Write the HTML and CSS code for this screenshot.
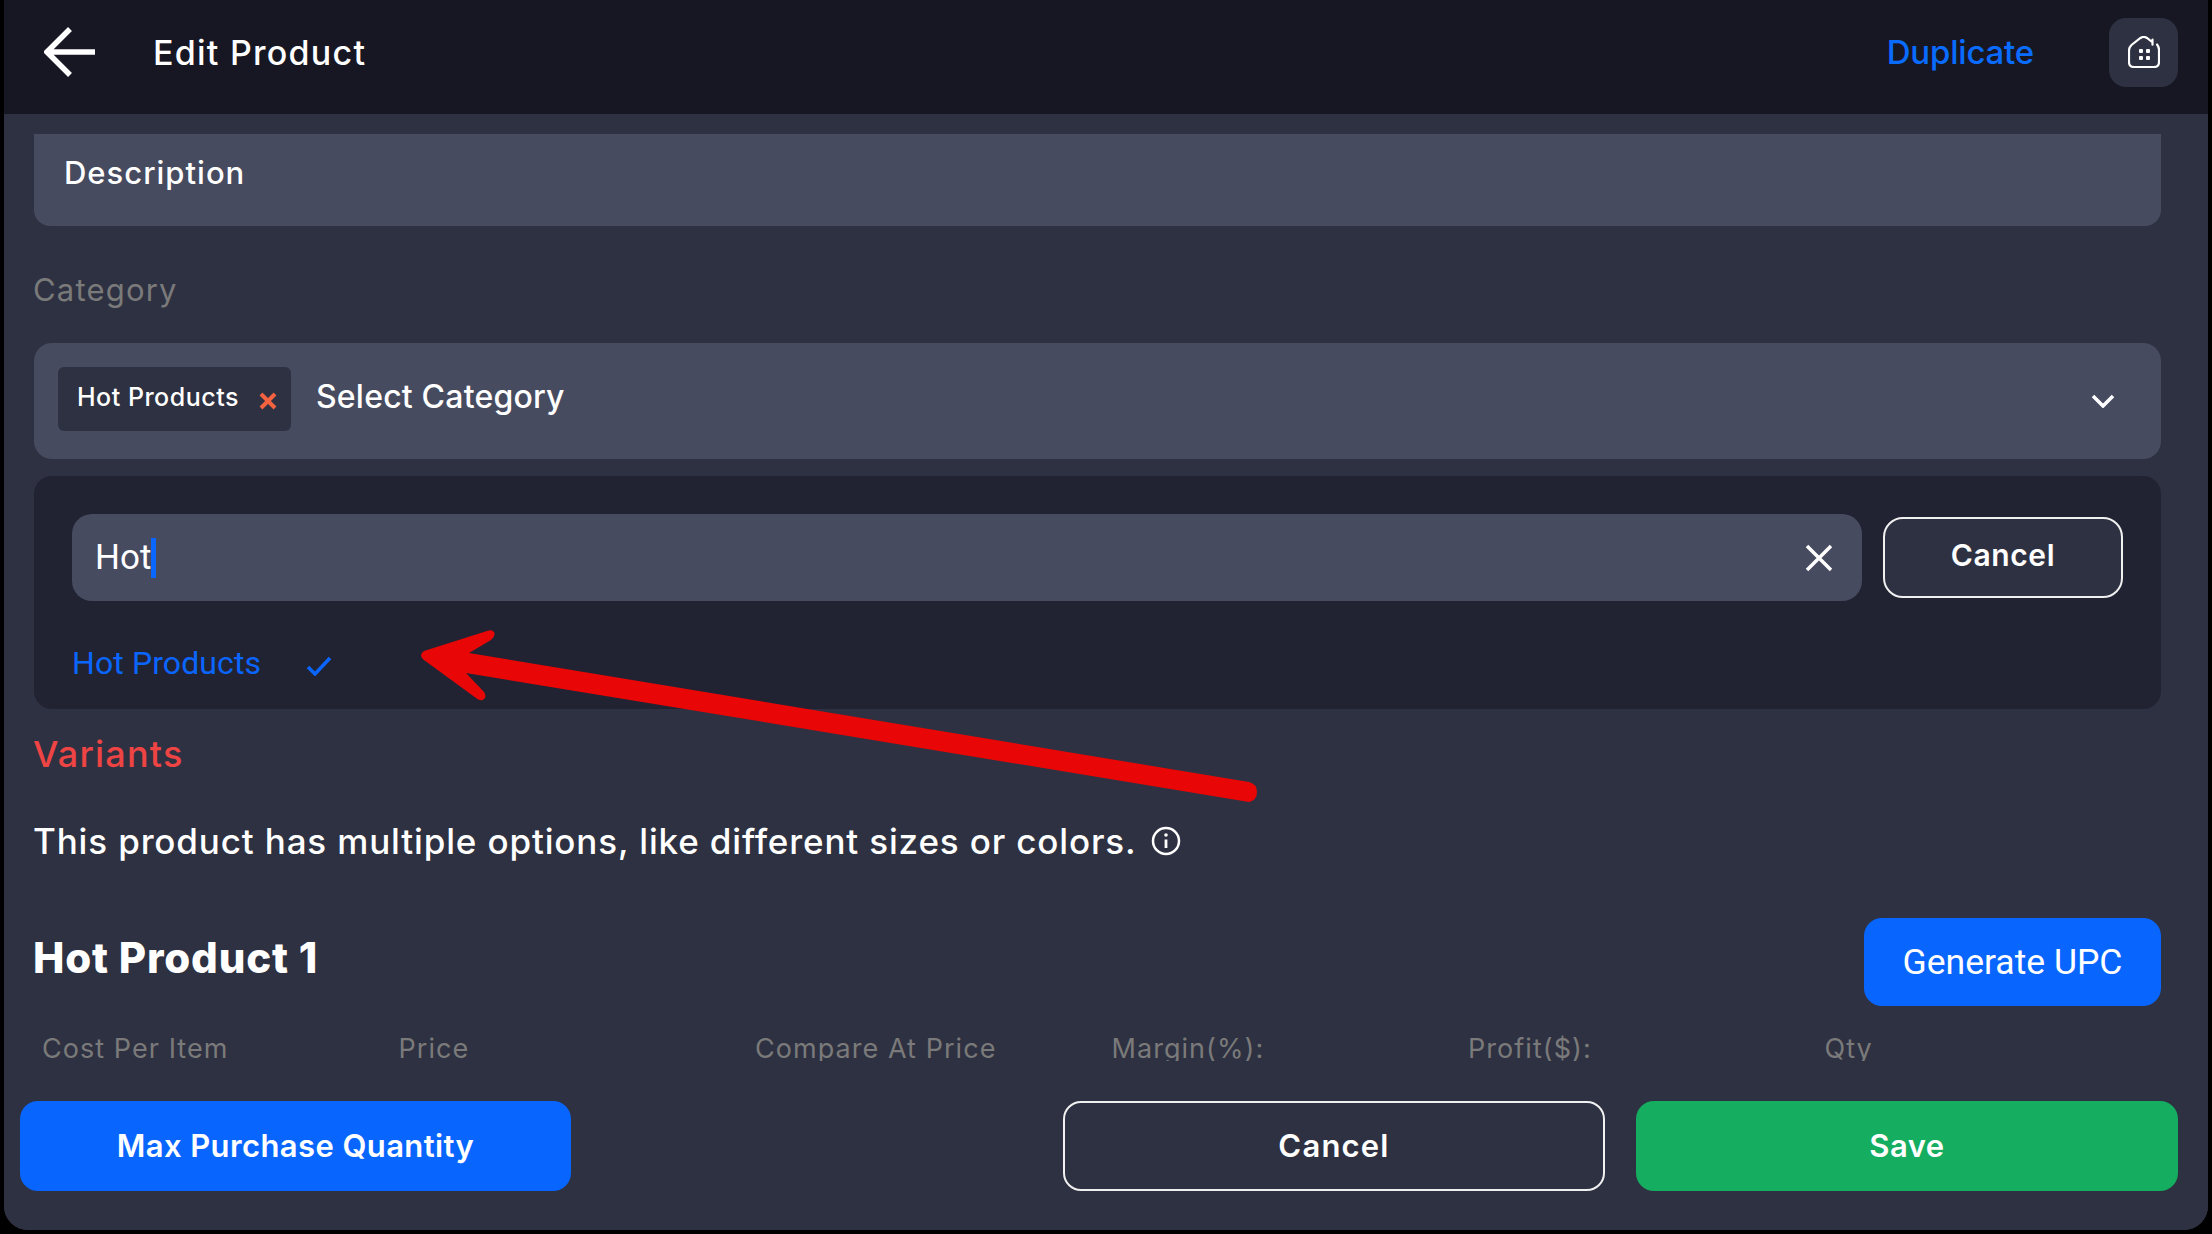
FILE: index.html
```html
<!DOCTYPE html>
<html lang="en">
<head>
<meta charset="utf-8">
<title>Edit Product</title>
<link rel="stylesheet" href="styles.css">
</head>
<body>
<main class="window">
  <header class="topbar">
    <svg class="back-icon" viewBox="0 0 52 50" aria-hidden="true"><path d="M51 25H4M26 2 3 25l23 23" fill="none" stroke="#fff" stroke-width="5.500"/></svg>
    <h1 class="title">Edit Product</h1>
    <a class="duplicate">Duplicate</a>
    <button class="home-btn" aria-label="Home">
      <svg viewBox="0 0 32 32" class="home-icon" aria-hidden="true"><path d="M24.5 3.5v5.2M29 8.5c1 1.300 2 3 2 5v12.500c0 3-2 5-5 5H6c-3 0-5-2-5-5V14.500c0-2.500 1-4 2.500-5.500l9-7c2-1.400 4.500-1.400 6.500 0l5 4" fill="none" stroke="#fff" stroke-width="2.200" stroke-linecap="round"/><rect x="11" y="13" width="4" height="4" rx="1" fill="#fff"/><rect x="18" y="13" width="4" height="4" rx="1" fill="#fff"/><rect x="11" y="20" width="4" height="4" rx="1" fill="#fff"/><rect x="18" y="20" width="4" height="4" rx="1" fill="#fff"/></svg>
    </button>
  </header>

  <section class="content">
    <div class="description">Description</div>
    <div class="label">Category</div>
    <div class="select">
      <span class="tag">Hot Products
        <svg class="tag-x" viewBox="0 0 18 18" aria-hidden="true"><path d="M2 2l14 14M16 2 2 16" stroke="#f4623f" stroke-width="4"/></svg>
      </span>
      <span class="select-text">Select Category</span>
      <svg class="chevron" viewBox="0 0 24 14" aria-hidden="true"><path d="M2 2l10 10L22 2" fill="none" stroke="#fff" stroke-width="3.500"/></svg>
    </div>
    <div class="panel">
      <div class="search-row">
        <div class="search">
          <span class="search-text">Hot</span><span class="caret"></span>
          <svg class="clear" viewBox="0 0 28 28" aria-hidden="true"><path d="M2 2l24 24M26 2 2 26" stroke="#fff" stroke-width="3.500"/></svg>
        </div>
        <button class="cancel-small">Cancel</button>
      </div>
      <div class="option">Hot Products
        <svg class="check" viewBox="0 0 26 20" aria-hidden="true"><path d="M2 11l7 7L24 2" fill="none" stroke="#0a66ff" stroke-width="3.500"/></svg>
      </div>
    </div>
    <div class="variants">Variants</div>
    <div class="variants-note">This product has multiple options, like different sizes or colors.
      <svg class="info" viewBox="0 0 30 30" aria-hidden="true"><circle cx="15" cy="15" r="13" fill="none" stroke="#fff" stroke-width="2.500"/><path d="M15 13.500V22" stroke="#fff" stroke-width="2.800"/><circle cx="15" cy="9" r="1.800" fill="#fff"/></svg>
    </div>
    <div class="product-row">
      <h2 class="product-name">Hot Product 1</h2>
      <button class="upc">Generate UPC</button>
    </div>
    <div class="columns">
      <span>Cost Per Item</span><span>Price</span><span>Compare At Price</span><span>Margin(%):</span><span>Profit($):</span><span>Qty</span>
    </div>
  </section>

  <footer class="footer">
    <button class="btn btn-max">Max Purchase Quantity</button>
    <button class="btn btn-cancel">Cancel</button>
    <button class="btn btn-save">Save</button>
  </footer>

  <svg class="arrow" viewBox="0 0 2212 1234" aria-hidden="true"><path d="M424 651 487 631Q492 629 494 632 496 636 491 640L469 653 1249 782Q1257 784 1257 792 1257 800 1249 802L466 673 484 692Q487 697 484 699 481 702 476 698L424 660Q418 655 424 651Z" fill="#e90606"/></svg>
</main>
</body>
</html>
```
FILE: styles.css
```css
* { box-sizing: border-box; }
html, body { margin: 0; padding: 0; height: 100%; background: #000; }
body { font-family: "Inter", "Liberation Sans", sans-serif; color: #fff; overflow: hidden; }
button { font-family: inherit; color: #fff; cursor: pointer; }
.window {
  position: relative; width: 2204px; height: 1230px; margin-left: 4px;
  background: #2e3141; border-radius: 0 0 24px 24px; overflow: hidden;
  display: flex; flex-direction: column;
}
.topbar { flex: none; height: 114px; background: #171723; display: flex; align-items: center; padding: 0 30px 10px 40px; }
.back-icon { width: 52px; height: 50px; flex: none; }
.title { margin: 0 0 0 57px; font-size: 34px; font-weight: 500; letter-spacing: 1.25px; flex: 1; }
.duplicate { color: #0a6cff; font-size: 33px; font-weight: 500; margin-right: 75px; letter-spacing: -.2px; }
.home-btn { width: 69px; height: 69px; border: 0; padding: 0; background: #2e3141; border-radius: 17px; display: flex; align-items: center; justify-content: center; }
.home-icon { width: 32px; height: 32px; }

.content { flex: none; height: 952px; padding: 20px 47px 0 30px; overflow: hidden; }
.description { height: 92px; background: #474b60; border-radius: 0 0 16px 16px; padding: 19px 30px 0; font-size: 31px; font-weight: 500; line-height: 40px; letter-spacing: 1px; }
.label { margin-top: 44px; font-size: 31px; line-height: 40px; color: #7a7a7a; letter-spacing: 1.2px; margin-left: -1px; }
.select { margin-top: 33px; height: 116px; background: #474b60; border-radius: 18px; display: flex; align-items: center; padding: 0 46px 0 24px; }
.tag { width: 233px; height: 64px; background: #2e3141; border-radius: 6px; display: flex; align-items: center; justify-content: space-between; padding: 0 14px 4px 19px; font-size: 25px; font-weight: 500; letter-spacing: .5px; margin-top: -4px; white-space: nowrap; }
.tag-x { width: 18px; height: 18px; margin-top: 8px; }
.select-text { margin-left: 25px; font-size: 32px; font-weight: 500; letter-spacing: .2px; flex: 1; margin-top: -10px; }
.chevron { width: 24px; height: 14px; margin-top: 0; }
.panel { margin-top: 17px; height: 233px; background: #212332; border-radius: 18px; padding: 38px 38px 0 38px; }
.search-row { display: flex; align-items: center; justify-content: space-between; }
.search { position: relative; width: 1790px; height: 87px; background: #474b60; border-radius: 20px; display: flex; align-items: center; padding-left: 23px; font-family: "Roboto", sans-serif; font-size: 35px; }
.search-text { line-height: 1; }
.caret { width: 5px; height: 40px; background: #0a66ff; }
.clear { width: 28px; height: 28px; margin-left: auto; margin-right: 29px; }
.cancel-small { width: 240px; height: 81px; margin-left: 21px; border: 2px solid #f0f0f0; border-radius: 20px; background: #2e3141; font-size: 30px; font-weight: 600; letter-spacing: .6px; padding-bottom: 6px; }
.option { margin-top: 40px; display: flex; align-items: center; font-family: "Roboto", sans-serif; color: #0a66ff; font-size: 32px; line-height: 44px; letter-spacing: .1px; }
.check { width: 26px; height: 20px; margin-left: 45px; margin-top: 6px; }
.variants { margin-top: 25px; font-size: 36px; font-weight: 500; line-height: 40px; color: #ee4444; letter-spacing: 1.200px; margin-left: -1px; }
.variants-note { margin-top: 47px; font-size: 35px; font-weight: 500; line-height: 40px; letter-spacing: .85px; display: flex; align-items: center; margin-left: -1px; }
.info { width: 30px; height: 30px; margin-left: 14px; }
.product-row { margin-top: 57px; display: flex; align-items: center; justify-content: space-between; height: 88px; }
.product-name { margin: -10px 0 0 -1px; font-size: 42px; font-weight: 800; letter-spacing: .8px; }
.upc { width: 297px; height: 88px; border: 0; border-radius: 18px; background: #0866ff; font-family: "Roboto", sans-serif; font-size: 35.500px; padding-top: 0; }
.columns { margin-top: 28px; padding-left: 8px; display: grid; grid-template-columns: repeat(6, 356.500px); font-size: 27px; line-height: 30px; color: #7a7a7a; letter-spacing: 1.050px; height: 30px; }

.footer { flex: 1; display: flex; background: #2e3141; padding: 0 30px 39px 16px; align-items: flex-end; margin-top: -5px; position: relative; }
.btn { height: 90px; border-radius: 18px; font-size: 31px; font-weight: 600; border: 0; padding-bottom: 3px; }
.btn-max { width: 551px; background: #0866ff; margin-right: 492px; letter-spacing: .4px; }
.btn-cancel { width: 542px; background: #2e3141; border: 2px solid #f0f0f0; margin-right: 31px; letter-spacing: 1.200px; }
.btn-save { width: 542px; background: #15ad60; letter-spacing: .5px; }
.arrow { position: absolute; left: -4px; top: 0; width: 2212px; height: 1234px; pointer-events: none; }
```
